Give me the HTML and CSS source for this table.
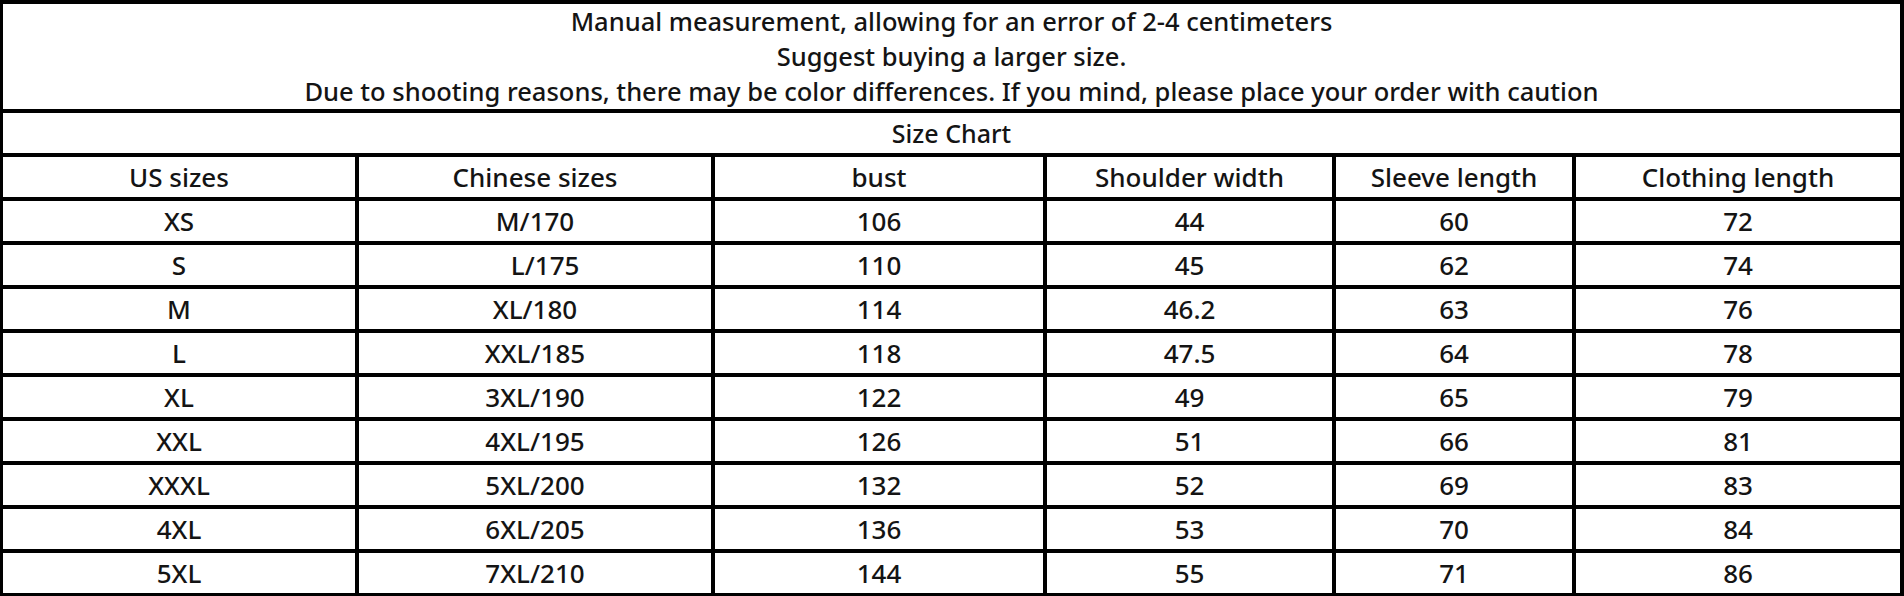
FILE: index.html
```html
<!DOCTYPE html>
<html>
<head>
<meta charset="utf-8">
<link rel="stylesheet" href="styles.css">
</head>
<body>
<div class="chart">
  <div class="notes">
    <div>Manual measurement, allowing for an error of 2-4 centimeters</div>
    <div>Suggest buying a larger size.</div>
    <div>Due to shooting reasons, there may be color differences. If you mind, please place your order with caution</div>
  </div>
  <div class="title">Size Chart</div>
  <div class="c">US sizes</div><div class="c">Chinese sizes</div><div class="c">bust</div><div class="c">Shoulder width</div><div class="c">Sleeve length</div><div class="c">Clothing length</div>
  <div class="c">XS</div><div class="c">M/170</div><div class="c">106</div><div class="c">44</div><div class="c">60</div><div class="c">72</div>
  <div class="c">S</div><div class="c">&nbsp;&nbsp;&nbsp;L/175</div><div class="c">110</div><div class="c">45</div><div class="c">62</div><div class="c">74</div>
  <div class="c">M</div><div class="c">XL/180</div><div class="c">114</div><div class="c">46.2</div><div class="c">63</div><div class="c">76</div>
  <div class="c">L</div><div class="c">XXL/185</div><div class="c">118</div><div class="c">47.5</div><div class="c">64</div><div class="c">78</div>
  <div class="c">XL</div><div class="c">3XL/190</div><div class="c">122</div><div class="c">49</div><div class="c">65</div><div class="c">79</div>
  <div class="c">XXL</div><div class="c">4XL/195</div><div class="c">126</div><div class="c">51</div><div class="c">66</div><div class="c">81</div>
  <div class="c">XXXL</div><div class="c">5XL/200</div><div class="c">132</div><div class="c">52</div><div class="c">69</div><div class="c">83</div>
  <div class="c">4XL</div><div class="c">6XL/205</div><div class="c">136</div><div class="c">53</div><div class="c">70</div><div class="c">84</div>
  <div class="c">5XL</div><div class="c">7XL/210</div><div class="c">144</div><div class="c">55</div><div class="c">71</div><div class="c">86</div>
</div>
</body>
</html>
```
FILE: styles.css
```css
html, body {
  margin: 0;
  padding: 0;
  background: #fff;
}
.chart {
  width: 1904px;
  height: 596px;
  box-sizing: border-box;
  background: #000;
  padding: 4px 4px 3px 3px;
  display: grid;
  grid-template-columns: 352px 352px 328px 285px 236px 324px;
  grid-template-rows: 105px repeat(11, 40px);
  gap: 4px;
  font-family: "Noto Sans", "Open Sans", sans-serif;
  font-weight: 500;
  color: #141414;
}
.chart > div {
  background: #fff;
}
.notes {
  grid-column: 1 / -1;
  display: flex;
  flex-direction: column;
  justify-content: center;
  align-items: center;
  font-size: 25.5px;
  line-height: 35px;
}
.title {
  grid-column: 1 / -1;
  display: flex;
  align-items: center;
  justify-content: center;
  font-size: 25px;
}
.c {
  display: flex;
  align-items: center;
  justify-content: center;
  font-size: 26px;
  white-space: pre;
}
```
